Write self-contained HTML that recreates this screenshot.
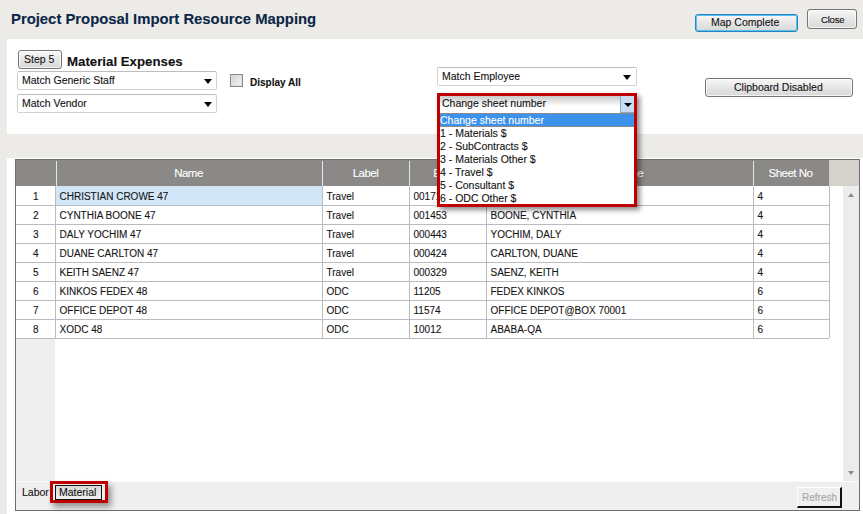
<!DOCTYPE html>
<html><head><meta charset="utf-8">
<style>
*{margin:0;padding:0;box-sizing:border-box}
html,body{width:863px;height:514px;overflow:hidden;background:#ecebe7;font-family:"Liberation Sans",sans-serif;color:#111}
.a{position:absolute}
.t{position:absolute;white-space:nowrap;line-height:1}
.btn{position:absolute;border:1px solid #767676;border-radius:3px;background:linear-gradient(#f8f8f8,#e6e6e6 50%,#d8d8d8);box-shadow:inset 0 0 0 1px rgba(255,255,255,.7)}
.sel{position:absolute;background:#fff;border:1px solid #d2d2d2;border-top-color:#bdbdbd;border-radius:2px}
.arr{position:absolute;width:0;height:0;border-left:4.5px solid transparent;border-right:4.5px solid transparent;border-top:5px solid #000}
.grid{position:absolute;left:16px;top:186px;}
.hl{position:absolute;background:#b9bdc1}
.t,.cell{-webkit-text-stroke:0.1px currentColor}
.cell{position:absolute;font-size:10px;line-height:1;white-space:nowrap;color:#141414}
</style></head><body>
<!-- title -->
<div class="t" style="left:11px;top:12px;font-size:14.85px;font-weight:bold;color:#0b2646">Project Proposal Import Resource Mapping</div>
<div class="btn" style="left:695px;top:14px;width:103px;height:18px;border-color:#2a80c0;box-shadow:0 0 0 1px #52c4f0 inset"></div>
<div class="t" style="left:711px;top:17px;font-size:10.5px">Map Complete</div>
<div class="btn" style="left:807px;top:9px;width:50px;height:20px"></div>
<div class="t" style="left:821px;top:15px;font-size:9.6px;letter-spacing:-0.25px">Close</div>

<!-- panel -->
<div class="a" style="left:7px;top:39px;width:856px;height:95px;background:#fff"></div>
<div class="btn" style="left:18px;top:50px;width:44px;height:19px"></div>
<div class="t" style="left:24px;top:54px;font-size:10.5px">Step 5</div>
<div class="t" style="left:67px;top:55px;font-size:13.25px;font-weight:bold;color:#111">Material Expenses</div>

<div class="sel" style="left:17px;top:71px;width:200px;height:19px"></div>
<div class="t" style="left:22px;top:75px;font-size:10.5px">Match Generic Staff</div>
<div class="arr" style="left:204px;top:79px"></div>
<div class="sel" style="left:17px;top:94px;width:200px;height:19px"></div>
<div class="t" style="left:22px;top:98px;font-size:10.5px">Match Vendor</div>
<div class="arr" style="left:204px;top:102px"></div>

<div class="a" style="left:230px;top:74px;width:13px;height:13px;border:1px solid #8a8a8a;box-shadow:inset 0 0 0 1px #dedede;background:linear-gradient(135deg,#cfcfcf,#f7f7f7)"></div>
<div class="t" style="left:250px;top:78px;font-size:10px;font-weight:bold;color:#111">Display All</div>

<div class="sel" style="left:437px;top:67px;width:200px;height:19px"></div>
<div class="t" style="left:442px;top:71px;font-size:10.5px">Match Employee</div>
<div class="arr" style="left:623px;top:75px"></div>

<div class="btn" style="left:705px;top:78px;width:148px;height:19px"></div>
<div class="t" style="left:734px;top:82px;font-size:10.5px">Clipboard Disabled</div>

<!-- table container -->
<div class="a" style="left:7px;top:158px;width:856px;height:356px;background:#fff"></div>
<div class="a" style="left:15px;top:159px;width:845px;height:352px;border:1px solid #6e6e6e;background:#fff"></div>
<!-- header -->
<div class="a" style="left:16px;top:160px;width:813px;height:26px;background:#8a8987"></div>
<div class="a" style="left:829px;top:160px;width:30px;height:26px;background:#d5d2cb"></div>
<div class="a" style="left:56px;top:161px;width:1px;height:25px;background:#e6e6e6"></div>
<div class="a" style="left:322px;top:161px;width:1px;height:25px;background:#e6e6e6"></div>
<div class="a" style="left:409px;top:161px;width:1px;height:25px;background:#e6e6e6"></div>
<div class="a" style="left:486px;top:161px;width:1px;height:25px;background:#e6e6e6"></div>
<div class="a" style="left:753px;top:161px;width:1px;height:25px;background:#e6e6e6"></div>
<div class="t" style="left:55px;width:267px;text-align:center;top:168px;font-size:11.5px;letter-spacing:-0.5px;color:#fff">Name</div>
<div class="t" style="left:322px;width:87px;text-align:center;top:168px;font-size:11.5px;letter-spacing:-0.5px;color:#fff">Label</div>
<div class="t" style="left:410px;width:77px;text-align:center;top:168px;font-size:11.5px;letter-spacing:-0.5px;color:#fff">Emp #</div>
<div class="t" style="left:483px;width:267px;text-align:center;top:168px;font-size:11.5px;letter-spacing:-0.5px;color:#fff">Emp Name</div>
<div class="t" style="left:753px;width:75px;text-align:center;top:168px;font-size:11.5px;letter-spacing:-0.5px;color:#fff">Sheet No</div>

<!-- body -->
<div class="a" style="left:16px;top:186px;width:39px;height:295px;background:#efefef"></div>
<div class="a" style="left:843px;top:186px;width:16px;height:295px;background:#ececec"></div>
<div class="a" style="left:848px;top:193px;width:0;height:0;border-left:3.5px solid transparent;border-right:3.5px solid transparent;border-bottom:4px solid #8a8a8a"></div>
<div class="a" style="left:848px;top:471px;width:0;height:0;border-left:3.5px solid transparent;border-right:3.5px solid transparent;border-top:4px solid #8a8a8a"></div>
<div id="rows"><div class="a" style="left:16px;top:186px;width:813px;height:152px;background:#fff"></div>
<div class="a" style="left:56px;top:186px;width:266px;height:19px;background:#d1e7f7"></div>
<div class="hl" style="left:16px;top:205px;width:813px;height:1px"></div>
<div class="hl" style="left:16px;top:224px;width:813px;height:1px"></div>
<div class="hl" style="left:16px;top:243px;width:813px;height:1px"></div>
<div class="hl" style="left:16px;top:262px;width:813px;height:1px"></div>
<div class="hl" style="left:16px;top:281px;width:813px;height:1px"></div>
<div class="hl" style="left:16px;top:300px;width:813px;height:1px"></div>
<div class="hl" style="left:16px;top:319px;width:813px;height:1px"></div>
<div class="hl" style="left:16px;top:338px;width:813px;height:1px"></div>
<div class="hl" style="left:55px;top:186px;width:1px;height:152px"></div>
<div class="hl" style="left:322px;top:186px;width:1px;height:152px"></div>
<div class="hl" style="left:409px;top:186px;width:1px;height:152px"></div>
<div class="hl" style="left:486px;top:186px;width:1px;height:152px"></div>
<div class="hl" style="left:753px;top:186px;width:1px;height:152px"></div>
<div class="hl" style="left:829px;top:186px;width:1px;height:152px"></div>
<div class="cell" style="left:33px;top:191.5px">1</div>
<div class="cell" style="left:59.5px;top:191.5px">CHRISTIAN CROWE 47</div>
<div class="cell" style="left:326.5px;top:191.5px">Travel</div>
<div class="cell" style="left:413.5px;top:191.5px">001711</div>
<div class="cell" style="left:490.5px;top:191.5px">CROWE, CHRISTIAN</div>
<div class="cell" style="left:757.5px;top:191.5px">4</div>
<div class="cell" style="left:33px;top:210.5px">2</div>
<div class="cell" style="left:59.5px;top:210.5px">CYNTHIA BOONE 47</div>
<div class="cell" style="left:326.5px;top:210.5px">Travel</div>
<div class="cell" style="left:413.5px;top:210.5px">001453</div>
<div class="cell" style="left:490.5px;top:210.5px">BOONE, CYNTHIA</div>
<div class="cell" style="left:757.5px;top:210.5px">4</div>
<div class="cell" style="left:33px;top:229.5px">3</div>
<div class="cell" style="left:59.5px;top:229.5px">DALY YOCHIM 47</div>
<div class="cell" style="left:326.5px;top:229.5px">Travel</div>
<div class="cell" style="left:413.5px;top:229.5px">000443</div>
<div class="cell" style="left:490.5px;top:229.5px">YOCHIM, DALY</div>
<div class="cell" style="left:757.5px;top:229.5px">4</div>
<div class="cell" style="left:33px;top:248.5px">4</div>
<div class="cell" style="left:59.5px;top:248.5px">DUANE CARLTON 47</div>
<div class="cell" style="left:326.5px;top:248.5px">Travel</div>
<div class="cell" style="left:413.5px;top:248.5px">000424</div>
<div class="cell" style="left:490.5px;top:248.5px">CARLTON, DUANE</div>
<div class="cell" style="left:757.5px;top:248.5px">4</div>
<div class="cell" style="left:33px;top:267.5px">5</div>
<div class="cell" style="left:59.5px;top:267.5px">KEITH SAENZ 47</div>
<div class="cell" style="left:326.5px;top:267.5px">Travel</div>
<div class="cell" style="left:413.5px;top:267.5px">000329</div>
<div class="cell" style="left:490.5px;top:267.5px">SAENZ, KEITH</div>
<div class="cell" style="left:757.5px;top:267.5px">4</div>
<div class="cell" style="left:33px;top:286.5px">6</div>
<div class="cell" style="left:59.5px;top:286.5px">KINKOS FEDEX 48</div>
<div class="cell" style="left:326.5px;top:286.5px">ODC</div>
<div class="cell" style="left:413.5px;top:286.5px">11205</div>
<div class="cell" style="left:490.5px;top:286.5px">FEDEX KINKOS</div>
<div class="cell" style="left:757.5px;top:286.5px">6</div>
<div class="cell" style="left:33px;top:305.5px">7</div>
<div class="cell" style="left:59.5px;top:305.5px">OFFICE DEPOT 48</div>
<div class="cell" style="left:326.5px;top:305.5px">ODC</div>
<div class="cell" style="left:413.5px;top:305.5px">11574</div>
<div class="cell" style="left:490.5px;top:305.5px">OFFICE DEPOT@BOX 70001</div>
<div class="cell" style="left:757.5px;top:305.5px">6</div>
<div class="cell" style="left:33px;top:324.5px">8</div>
<div class="cell" style="left:59.5px;top:324.5px">XODC 48</div>
<div class="cell" style="left:326.5px;top:324.5px">ODC</div>
<div class="cell" style="left:413.5px;top:324.5px">10012</div>
<div class="cell" style="left:490.5px;top:324.5px">ABABA-QA</div>
<div class="cell" style="left:757.5px;top:324.5px">6</div></div><!--/rows-->

<!-- bottom bar -->
<div class="a" style="left:16px;top:481px;width:843px;height:29px;background:#efefef;border-top:1px solid #fafafa"></div>
<div class="t" style="left:22px;top:487px;font-size:10.5px">Labor</div>
<div class="a" style="left:50px;top:481px;width:58px;height:22px;border:3.5px solid #c00000;box-shadow:3px 4px 6px rgba(0,0,0,.4)"></div>
<div class="a" style="left:55px;top:485px;width:47px;height:15px;border:1px solid #111;background:linear-gradient(#d8d8d8,#f0f0f0)"></div>
<div class="t" style="left:59px;top:487px;font-size:10.5px">Material</div>
<div class="a" style="left:797px;top:487px;width:45px;height:21px;border-top:1px solid #fff;border-left:1px solid #fff;border-right:2px solid #111;border-bottom:2px solid #111;background:#efefef"></div>
<div class="t" style="left:802px;top:493px;font-size:10px;color:#a6a6a6">Refresh</div>

<!-- dropdown -->
<div class="a" style="left:437px;top:93px;width:200px;height:114px;border:3px solid #c00000;background:#fff;box-shadow:3px 3px 5px rgba(0,0,0,.45)"></div>
<div class="a" style="left:440px;top:96px;width:194px;height:17px;background:linear-gradient(#c9c9c9,#fff 60%)"></div>
<div class="a" style="left:620px;top:96px;width:14px;height:17px;background:#c8def0;border-left:1px solid #8ca9c4;border-bottom:1px solid #8ca9c4"></div>
<div class="arr" style="left:624px;top:103px;border-left-width:4px;border-right-width:4px;border-top-width:4px"></div>
<div class="t" style="left:442px;top:98px;font-size:10.5px">Change sheet number</div>
<div class="a" style="left:440px;top:113px;width:194px;height:14px;background:#3d92ec;border-top:1px dotted #e08020;border-bottom:1px dotted #e08020"></div>
<div class="t" style="left:440px;top:115px;font-size:10.5px;color:#fff">Change sheet number</div>
<div class="t" style="left:440px;top:128px;font-size:10.5px">1 - Materials $</div>
<div class="t" style="left:440px;top:141px;font-size:10.5px">2 - SubContracts $</div>
<div class="t" style="left:440px;top:154px;font-size:10.5px">3 - Materials Other $</div>
<div class="t" style="left:440px;top:167px;font-size:10.5px">4 - Travel $</div>
<div class="t" style="left:440px;top:180px;font-size:10.5px">5 - Consultant $</div>
<div class="t" style="left:440px;top:193px;font-size:10.5px">6 - ODC Other $</div>
</body></html>
